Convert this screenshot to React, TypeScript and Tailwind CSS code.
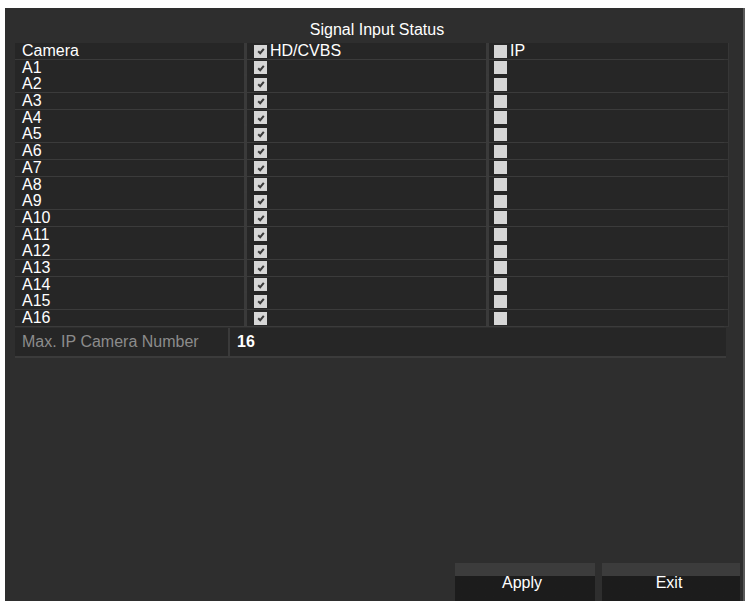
import React from "react";

const cameras = Array.from({ length: 16 }, (_, i) => `A${i + 1}`);

function CheckBox({ checked }: { checked: boolean }) {
  return (
    <span className="flex h-[13px] w-[13px] shrink-0 items-center justify-center bg-[#d6d6d6]">
      {checked && (
        <svg width="10" height="10" viewBox="0 0 10 10">
          <path d="M2.2 5.2 L4.2 7.2 L7.8 2.8" fill="none" stroke="#3a3a3a" strokeWidth="2" />
        </svg>
      )}
    </span>
  );
}

function Row({ label, head }: { label: string; head?: boolean }) {
  return (
    <div className="grid h-[16.7px] grid-cols-[229px_239px_239px] gap-x-[3px] border-b-2 border-[#3b3b3b]">
      <div className="flex items-center bg-[#262626] pl-[7px] text-[16px] leading-none text-white">{label}</div>
      <div className="flex items-center gap-[3px] bg-[#262626] pl-[7px] text-[16px] leading-none text-white">
        <CheckBox checked />
        {head && <span>HD/CVBS</span>}
      </div>
      <div className="flex items-center gap-[3px] bg-[#262626] pl-[5px] text-[16px] leading-none text-white">
        <CheckBox checked={false} />
        {head && <span>IP</span>}
      </div>
    </div>
  );
}

export default function App() {
  return (
    <div className="h-[601px] w-[748px] overflow-hidden bg-white pl-[5px] pt-[8px]" style={{ fontFamily: '"Liberation Sans", Arial, sans-serif' }}>
      <div className="flex h-[593px] w-[740px] flex-col border-r-2 border-[#5a5a5a] bg-[#2e2e2e]">
        <div className="flex h-[35px] items-end justify-center pb-[5px] pl-[6px] text-[16px] leading-none text-white">Signal Input Status</div>
        <div className="ml-[10px] w-[714px] border-r-[5px] border-[#363636] bg-[#3a3a3a]">
          <Row label="Camera" head />
          {cameras.map((c) => (
            <Row key={c} label={c} />
          ))}
        </div>
        <div className="ml-[10px] mt-[1px] grid h-[30px] w-[711px] grid-cols-[213px_1fr] gap-x-[2px] border-b-2 border-[#3b3b3b] bg-[#3a3a3a]">
          <div className="flex items-center bg-[#262626] pl-[7px] text-[16px] text-[#8c8c8c]">Max. IP Camera Number</div>
          <div className="flex items-center bg-[#262626] pl-[7px] text-[16px] font-bold text-white">16</div>
        </div>
        <div className="flex-1" />
        <div className="flex justify-end gap-[7px] pr-[3px]">
          <button className="h-[38px] w-[140px] bg-gradient-to-b from-[#3c3c3c] from-35% to-[#1c1c1c] to-35% pt-[2px] pr-[6px] text-[16px] text-white">Apply</button>
          <button className="h-[38px] w-[138px] bg-gradient-to-b from-[#3c3c3c] from-35% to-[#1c1c1c] to-35% pt-[2px] pr-[4px] text-[16px] text-white">Exit</button>
        </div>
      </div>
    </div>
  );
}
